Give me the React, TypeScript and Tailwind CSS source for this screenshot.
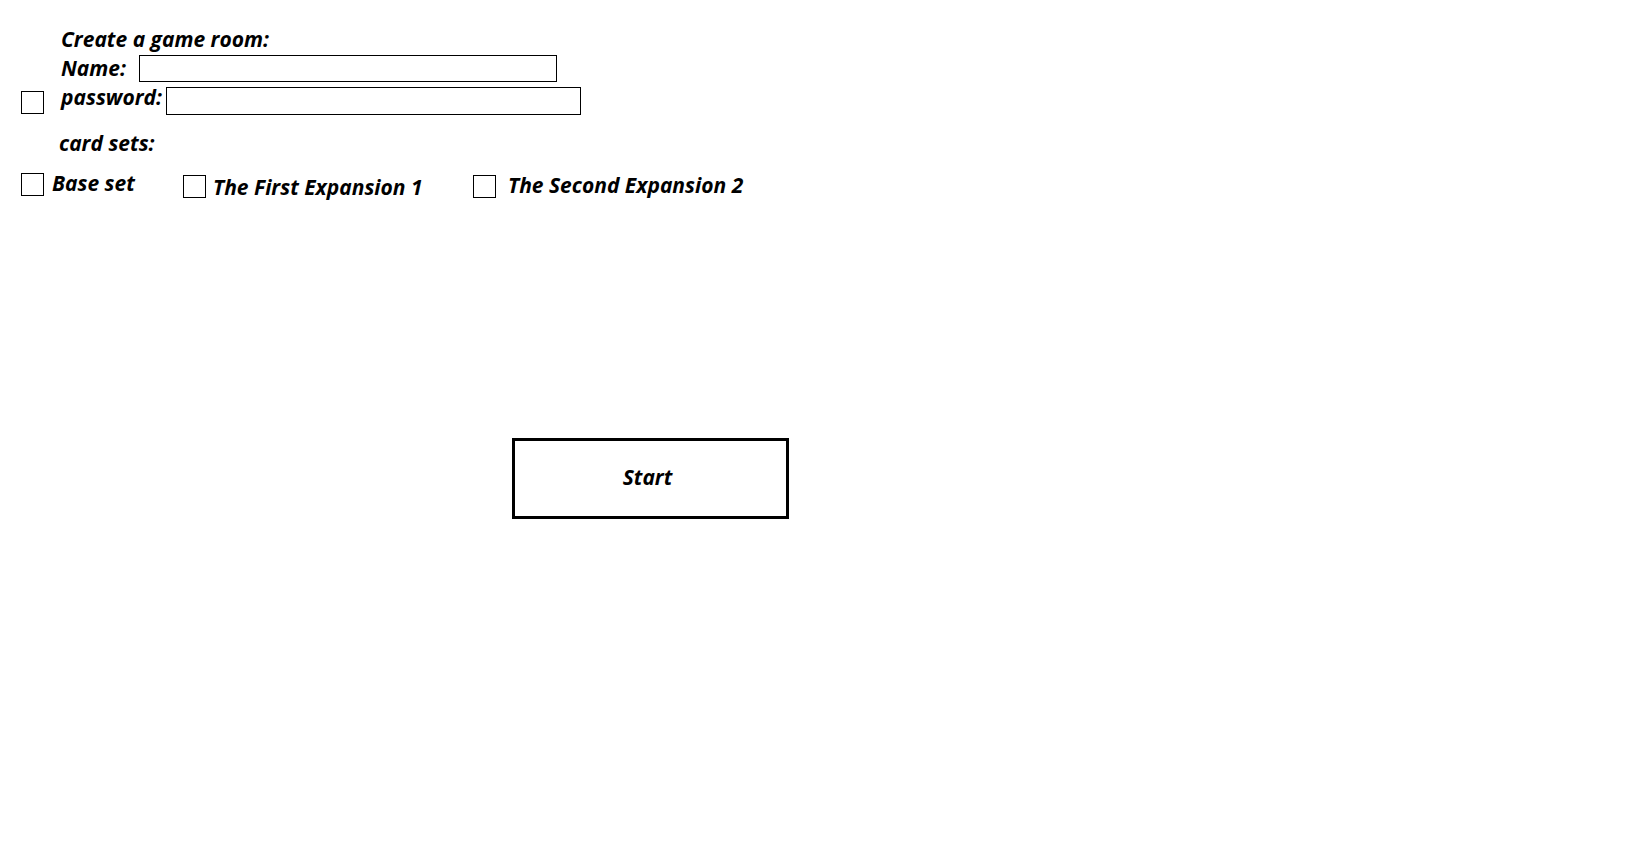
import React from "react";

const Box = ({ className }: { className: string }) => (
  <div className={"border border-black bg-white " + className}></div>
);

const App = () => {
  return (
    <div className="min-h-screen w-full bg-white text-black font-['Open_Sans',sans-serif] font-bold italic text-[21px] leading-[20px]">
      <div className="pl-[61px] pt-[29px] h-[49px]">Create a game room:</div>

      <div className="flex items-start pl-[61px] mt-[6px]">
        <span className="w-[78px] mt-[3px]">Name:</span>
        <input className="w-[418px] h-[27px] border border-black outline-none" />
      </div>

      <div className="flex items-start pl-[21px] mt-[5px]">
        <Box className="w-[23px] h-[23px] mt-[4px]" />
        <span className="ml-[17px] w-[105px]">password:</span>
        <input
          type="password"
          className="w-[415px] h-[28px] border border-black outline-none"
        />
      </div>

      <div className="pl-[59px] mt-[18px]">card sets:</div>

      <div className="flex items-start pl-[21px] mt-[20px]">
        <Box className="w-[23px] h-[23px]" />
        <span className="ml-[8px] w-[131px]">Base set</span>
        <Box className="w-[23px] h-[23px] mt-[2px]" />
        <span className="ml-[7px] w-[260px] mt-[4px]">The First Expansion 1</span>
        <Box className="w-[23px] h-[23px] mt-[2px]" />
        <span className="ml-[12px] mt-[2px]">The Second Expansion 2</span>
      </div>

      <div className="pl-[512px] mt-[240px]">
        <button className="w-[277px] h-[81px] border-[3px] border-black flex items-center justify-center pr-[6px] pb-[3px] font-bold italic">
          Start
        </button>
      </div>
    </div>
  );
};

export default App;
